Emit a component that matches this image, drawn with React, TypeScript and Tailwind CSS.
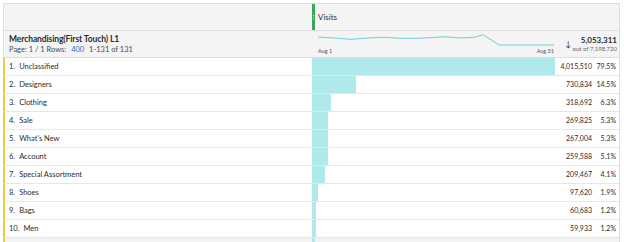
const rows = [
  { label: "Unclassified", value: "4,015,510", raw: 4015510, pct: "79.5%" },
  { label: "Designers", value: "730,834", raw: 730834, pct: "14.5%" },
  { label: "Clothing", value: "318,692", raw: 318692, pct: "6.3%" },
  { label: "Sale", value: "269,825", raw: 269825, pct: "5.3%" },
  { label: "What's New", value: "267,004", raw: 267004, pct: "5.3%" },
  { label: "Account", value: "259,588", raw: 259588, pct: "5.1%" },
  { label: "Special Assortment", value: "209,467", raw: 209467, pct: "4.1%" },
  { label: "Shoes", value: "97,620", raw: 97620, pct: "1.9%" },
  { label: "Bags", value: "60,683", raw: 60683, pct: "1.2%" },
  { label: "Men", value: "59,933", raw: 59933, pct: "1.2%" },
];

const MAX = 4015510;
const BAR_W = 243;

const Sparkline = () => (
  <svg width="237" height="14" viewBox="0 0 237 14" className="block">
    <polyline
      fill="none"
      stroke="#6fcdd3"
      strokeWidth="1"
      points="0,3 16,4 33,5.3 50,4 66,3.3 83,4.3 100,4.3 116,3.5 126,2.7 143,4 156,3.3 165,0.7 181,11 200,11 236,11"
    />
  </svg>
);

export default function App() {
  return (
    <div
      className="w-[624px] h-[242px] overflow-hidden bg-white pt-[3px] pl-[3px] text-[#2c2c2c]"
      style={{ fontFamily: "Lato, 'Open Sans', sans-serif" }}
    >
      <div className="w-[617px] border-t border-r border-[#dedede]">
        {/* metric header */}
        <div className="grid grid-cols-[308px_1fr] h-[27px] bg-[#f4f4f4] border-b border-l border-[#dedede]">
          <div />
          <div className="flex items-center">
            <div className="w-[3px] h-full bg-[#3da35d] flex flex-col items-center justify-center gap-[1px]">
              <span className="w-[1px] h-[1px] bg-[#a6dbb6]" />
              <span className="w-[1px] h-[1px] bg-[#a6dbb6]" />
              <span className="w-[1px] h-[1px] bg-[#a6dbb6]" />
            </div>
            <span className="ml-[3px] text-[8px]">Visits</span>
          </div>
        </div>

        {/* dimension header */}
        <div className="grid grid-cols-[308px_1fr] h-[27px] bg-[#f4f4f4] border-b border-l border-[#dedede]">
          <div className="pl-[5px] flex flex-col justify-center leading-none">
            <span className="text-[8.5px] font-bold tracking-[-0.1px]">Merchandising(First Touch) L1</span>
            <span className="text-[7.5px] mt-[3px] text-[#4b4b4b]">
              Page: 1 / 1 Rows: <span className="text-[#2f6dcb] mx-[3px]">400</span> 1-131 of 131
            </span>
          </div>
          <div className="flex items-center pl-[6px] pr-[2px]">
            <div className="flex flex-col shrink-0">
              <Sparkline />
              <div className="flex justify-between w-[236px] text-[5.5px] text-[#555] mt-[1px] leading-none">
                <span>Aug 1</span>
                <span>Aug 31</span>
              </div>
            </div>
            <span className="ml-[10px] text-[8px] leading-none">↓</span>
            <div className="ml-auto flex flex-col items-end leading-none whitespace-nowrap">
              <span className="text-[8px] font-bold">5,053,311</span>
              <span className="text-[6px] text-[#666] mt-[2px]">out of 7,198,720</span>
            </div>
          </div>
        </div>

        {rows.map((r, i) => (
          <div
            key={r.label}
            className="grid grid-cols-[307px_1fr] h-[18px] border-b border-l-2 border-b-[#e6e6e6] border-l-[#e6cf3f] bg-white"
          >
            <div className="flex items-center pl-[4px] text-[7.5px]">
              <span className="mr-[4px]">{i + 1}.</span>
              <span>{r.label}</span>
            </div>
            <div className="relative flex items-center justify-end pr-[3px] text-[7px]">
              <div
                className="absolute left-0 top-0 bottom-0 bg-[#b0e9ea]"
                style={{ width: `${(r.raw / MAX) * BAR_W}px` }}
              />
              <span className="relative">{r.value}</span>
              <span className="relative w-[24px] text-right">{r.pct}</span>
            </div>
          </div>
        ))}
        <div className="grid grid-cols-[307px_1fr] h-[18px] border-l-2 border-l-[#e6cf3f] bg-[#f3f3f3]">
          <div />
          <div className="relative">
            <div className="absolute left-0 top-0 bottom-0 w-[3px] bg-[#b0e9ea]" />
          </div>
        </div>
      </div>
    </div>
  );
}
